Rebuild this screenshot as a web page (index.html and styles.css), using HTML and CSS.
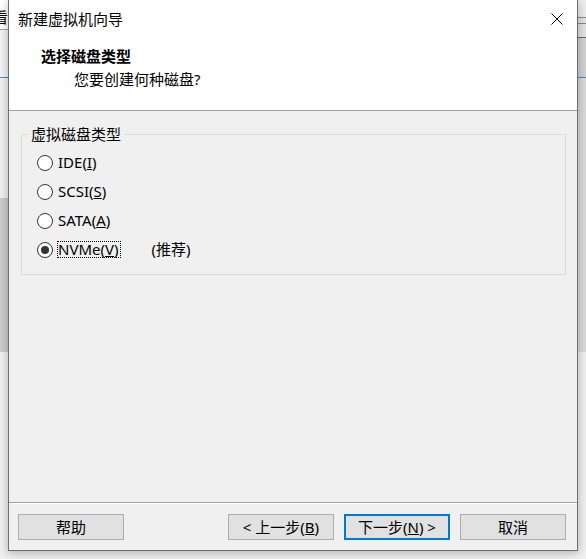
FILE: index.html
```html
<!DOCTYPE html>
<html lang="zh-CN">
<head>
<meta charset="utf-8">
<title>新建虚拟机向导</title>
<link rel="stylesheet" href="styles.css">
</head>
<body>
<div class="screen">
  <div class="strip strip-left"><span class="peek">看</span></div>
  <div class="dialog">
    <div class="header">
      <div class="titlebar">
        <span class="title">新建虚拟机向导</span>
        <svg class="close" width="12" height="12" viewBox="0 0 12 12" aria-hidden="true">
          <path d="M0.5 0.5 L11.5 11.5 M11.5 0.5 L0.5 11.5" stroke="#000" stroke-width="1" fill="none"/>
        </svg>
      </div>
      <div class="heading">选择磁盘类型</div>
      <div class="subheading">您要创建何种磁盘?</div>
    </div>
    <div class="body">
      <fieldset class="group">
        <legend class="legend">虚拟磁盘类型</legend>
        <div class="row"><span class="radio"></span><span class="label">IDE(<u>I</u>)</span></div>
        <div class="row"><span class="radio"></span><span class="label">SCSI(<u>S</u>)</span></div>
        <div class="row"><span class="radio"></span><span class="label">SATA(<u>A</u>)</span></div>
        <div class="row"><span class="radio checked"></span><span class="label focus">NVMe(<u>V</u>)</span><span class="hint">(推荐)</span></div>
      </fieldset>
    </div>
    <div class="footer">
      <button class="btn">帮助</button>
      <span class="spacer"></span>
      <button class="btn">&lt; 上一步(<u>B</u>)</button>
      <button class="btn default">下一步(<u>N</u>) &gt;</button>
      <button class="btn">取消</button>
    </div>
  </div>
  <div class="strip strip-right"></div>
</div>
</body>
</html>
```
FILE: styles.css
```css
html, body {
  margin: 0;
  padding: 0;
}
body {
  width: 586px;
  height: 559px;
  overflow: hidden;
  background: #f0f0f0;
  font-family: "Noto Sans", "Noto Sans CJK SC", sans-serif;
  font-size: 15px;
  color: #000;
}
.screen {
  display: flex;
  width: 586px;
  height: 559px;
  align-items: flex-start;
}
.strip {
  width: 8px;
  height: 559px;
  flex: none;
  overflow: hidden;
}
.strip-left {
  background: linear-gradient(to bottom,
    #ffffff 0, #ffffff 29px,
    #a0a0a0 29px, #a0a0a0 30px,
    #f3f3f3 30px, #f3f3f3 77px,
    #3d8fd1 77px, #3d8fd1 78px,
    #f0f0f0 78px, #f0f0f0 198px,
    #cccccc 198px, #cccccc 352px,
    #f0f0f0 352px);
}
.peek {
  display: block;
  margin-left: -7px;
  margin-top: 9px;
  line-height: 16px;
  font-size: 15px;
  white-space: nowrap;
}
.strip-right {
  background: linear-gradient(to bottom,
    #ececec 0, #ececec 17px,
    #8a8a8a 17px, #8a8a8a 18px,
    #e2e2e2 18px, #e2e2e2 23px,
    #8a8a8a 23px, #8a8a8a 24px,
    #e2e2e2 24px, #e2e2e2 37px,
    #6a6a6a 37px, #6a6a6a 38px,
    #d0d0d0 38px, #d0d0d0 77px,
    #3d8fd1 77px, #3d8fd1 78px,
    #d8d8d8 78px, #d8d8d8 352px,
    #f0f0f0 352px);
}
.dialog {
  position: relative;
  z-index: 1;
  box-sizing: border-box;
  width: 570px;
  height: 551px;
  flex: none;
  display: flex;
  flex-direction: column;
  background: #f0f0f0;
  border: 1px solid #6f6f6f;
  border-top: none;
  box-shadow: 0 2px 9px rgba(0, 0, 0, 0.28);
}
.header {
  box-sizing: border-box;
  height: 111px;
  flex: none;
  background: #ffffff;
  border-bottom: 1px solid #a0a0a0;
}
.titlebar {
  height: 38px;
  display: flex;
  align-items: center;
  padding: 0 14px 0 9px;
}
.title {
  line-height: 20px;
}
.close {
  margin-left: auto;
  display: block;
}
.heading {
  margin-top: 8px;
  padding-left: 32px;
  line-height: 20px;
  font-weight: bold;
}
.subheading {
  margin-top: 3px;
  padding-left: 65px;
  line-height: 20px;
}
.body {
  flex: 1;
  display: flex;
  flex-direction: column;
}
.group {
  margin: 13px 11px 0 12px;
  padding: 4px 0 10px 15px;
  border: 1px solid #dcdcdc;
  min-width: 0;
}
.legend {
  margin-left: -9px;
  padding: 0 3px;
  line-height: 20px;
}
.row {
  height: 29px;
  display: flex;
  align-items: center;
}
.radio {
  box-sizing: border-box;
  width: 16px;
  height: 16px;
  border: 1px solid #333333;
  border-radius: 50%;
  background: #ffffff;
  display: flex;
  align-items: center;
  justify-content: center;
  flex: none;
}
.radio.checked::after {
  content: "";
  width: 8px;
  height: 8px;
  border-radius: 50%;
  background: #333333;
}
.label {
  margin-left: 4px;
  padding: 0 1px 0 0;
  line-height: 15px;
  border: 1px solid transparent;
}
.label.focus {
  border: 1px dotted #000000;
}
.hint {
  margin-left: 31px;
  line-height: 15px;
}
.footer {
  flex: none;
  display: flex;
  align-items: flex-start;
  padding: 11px 11px 10px 9px;
  border-top: 1px solid #a0a0a0;
  box-shadow: inset 0 1px 0 #ffffff;
}
.spacer {
  flex: 1;
}
.btn {
  box-sizing: border-box;
  width: 106px;
  height: 26px;
  margin-left: 10px;
  padding: 0;
  background: #e1e1e1;
  border: 1px solid #adadad;
  font-family: "Noto Sans", "Noto Sans CJK SC", sans-serif;
  font-size: 15px;
  line-height: 20px;
  color: #000;
}
.btn:first-child {
  margin-left: 0;
}
.btn.default {
  border: 2px solid #0078d7;
}
```
